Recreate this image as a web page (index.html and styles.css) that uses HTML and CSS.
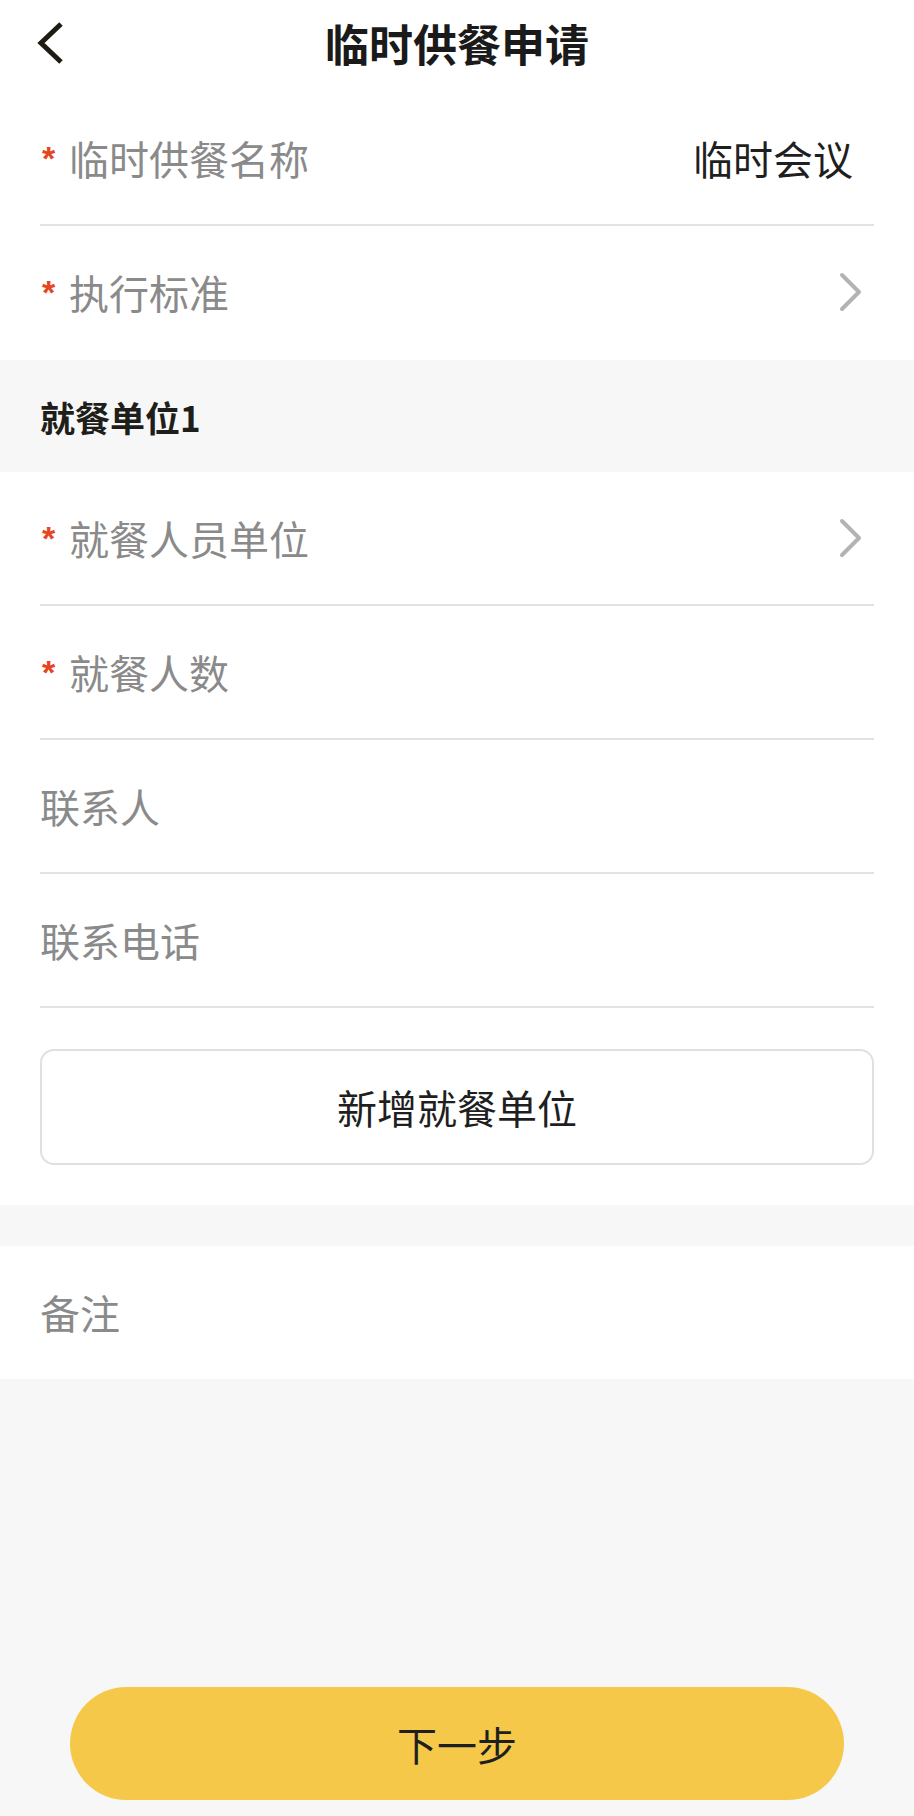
FILE: index.html
```html
<!DOCTYPE html>
<html lang="zh-CN">
<head>
<meta charset="utf-8">
<title>临时供餐申请</title>
<link rel="stylesheet" href="styles.css">
</head>
<body>
<div class="page">
  <header class="nav">
    <div class="nav-left">
      <svg class="back" width="30" height="46" viewBox="0 0 30 46"><polyline points="25,4 5,23 25,42" fill="none" stroke="#1e1b12" stroke-width="5" stroke-linejoin="miter"/></svg>
    </div>
    <h1 class="nav-title">临时供餐申请</h1>
    <div class="nav-right"></div>
  </header>

  <section class="card card-top">
    <div class="row">
      <span class="req">*</span><span class="label">临时供餐名称</span>
      <span class="value">临时会议</span>
    </div>
    <div class="row">
      <span class="req">*</span><span class="label">执行标准</span>
      <svg class="chev" width="26" height="40" viewBox="0 0 26 40"><polyline points="4,3 21,20 4,37" fill="none" stroke="#b3b3b3" stroke-width="4" stroke-linecap="round" stroke-linejoin="round"/></svg>
    </div>
  </section>

  <div class="group-title">就餐单位1</div>

  <section class="card card-unit">
    <div class="row">
      <span class="req">*</span><span class="label">就餐人员单位</span>
      <svg class="chev" width="26" height="40" viewBox="0 0 26 40"><polyline points="4,3 21,20 4,37" fill="none" stroke="#b3b3b3" stroke-width="4" stroke-linecap="round" stroke-linejoin="round"/></svg>
    </div>
    <div class="row">
      <span class="req">*</span><span class="label">就餐人数</span>
    </div>
    <div class="row">
      <span class="label">联系人</span>
    </div>
    <div class="row row-divided">
      <span class="label">联系电话</span>
    </div>
    <button class="add-btn" type="button">新增就餐单位</button>
  </section>

  <section class="card card-remark">
    <div class="row">
      <span class="label">备注</span>
    </div>
  </section>

  <footer class="footer">
    <button class="next-btn" type="button">下一步</button>
  </footer>
</div>
</body>
</html>
```

FILE: styles.css
```css
* { box-sizing: border-box; }

html, body {
  margin: 0;
  padding: 0;
}

body {
  background: #f7f7f7;
  font-family: "Noto Sans CJK SC", "Noto Sans", sans-serif;
  color: #1f1f1f;
}

.page {
  min-height: 1816px;
  display: flex;
  flex-direction: column;
}

.nav {
  height: 86px;
  background: #ffffff;
  display: grid;
  grid-template-columns: 1fr auto 1fr;
  align-items: center;
}

.nav-left {
  display: flex;
  align-items: center;
  padding-left: 36px;
}

.back { display: block; }

.nav-title {
  margin: 0;
  font-size: 44px;
  font-weight: 700;
  line-height: 1;
  color: #1a1a1a;
}

.card {
  background: #ffffff;
  padding: 0 40px;
}

.card-top { padding-top: 6px; }

.row {
  height: 134px;
  display: flex;
  align-items: center;
  border-bottom: 2px solid #e2e2e2;
}

.card-top .row:last-child,
.card-remark .row {
  border-bottom-color: transparent;
}

.req {
  width: 29px;
  padding-left: 2px;
  align-self: center;
  font-family: "Liberation Sans", sans-serif;
  font-size: 34px;
  font-weight: 700;
  line-height: 1;
  color: #e5461f;
  margin-top: 0;
}

.label {
  font-size: 40px;
  line-height: 1;
  color: #8a8a8a;
}

.value {
  margin-left: auto;
  padding-right: 21px;
  font-size: 40px;
  line-height: 1;
  color: #1f1f1f;
}

.chev {
  margin-left: auto;
  margin-right: 10px;
  display: block;
}

.group-title {
  height: 112px;
  display: flex;
  align-items: center;
  padding: 0 40px;
  font-size: 35px;
  font-weight: 700;
  color: #1e1e1a;
  line-height: 1;
}

.card-unit {
  padding-bottom: 40px;
}

.add-btn {
  display: block;
  width: 100%;
  height: 116px;
  margin-top: 41px;
  background: #ffffff;
  border: 2px solid #e0e0e0;
  border-radius: 14px;
  font-family: "Noto Sans CJK SC", "Noto Sans", sans-serif;
  font-size: 40px;
  color: #1f1f1f;
  padding: 0;
}

.card-remark {
  margin-top: 41px;
}

.card-remark .row {
  height: 133px;
}

.footer {
  margin-top: auto;
  padding: 0 70px 16px;
}

.next-btn {
  display: block;
  width: 100%;
  height: 113px;
  border: none;
  border-radius: 57px;
  background: #f5c84a;
  font-family: "Noto Sans CJK SC", "Noto Sans", sans-serif;
  font-size: 40px;
  color: #1f1f1f;
  padding: 0;
}
```
